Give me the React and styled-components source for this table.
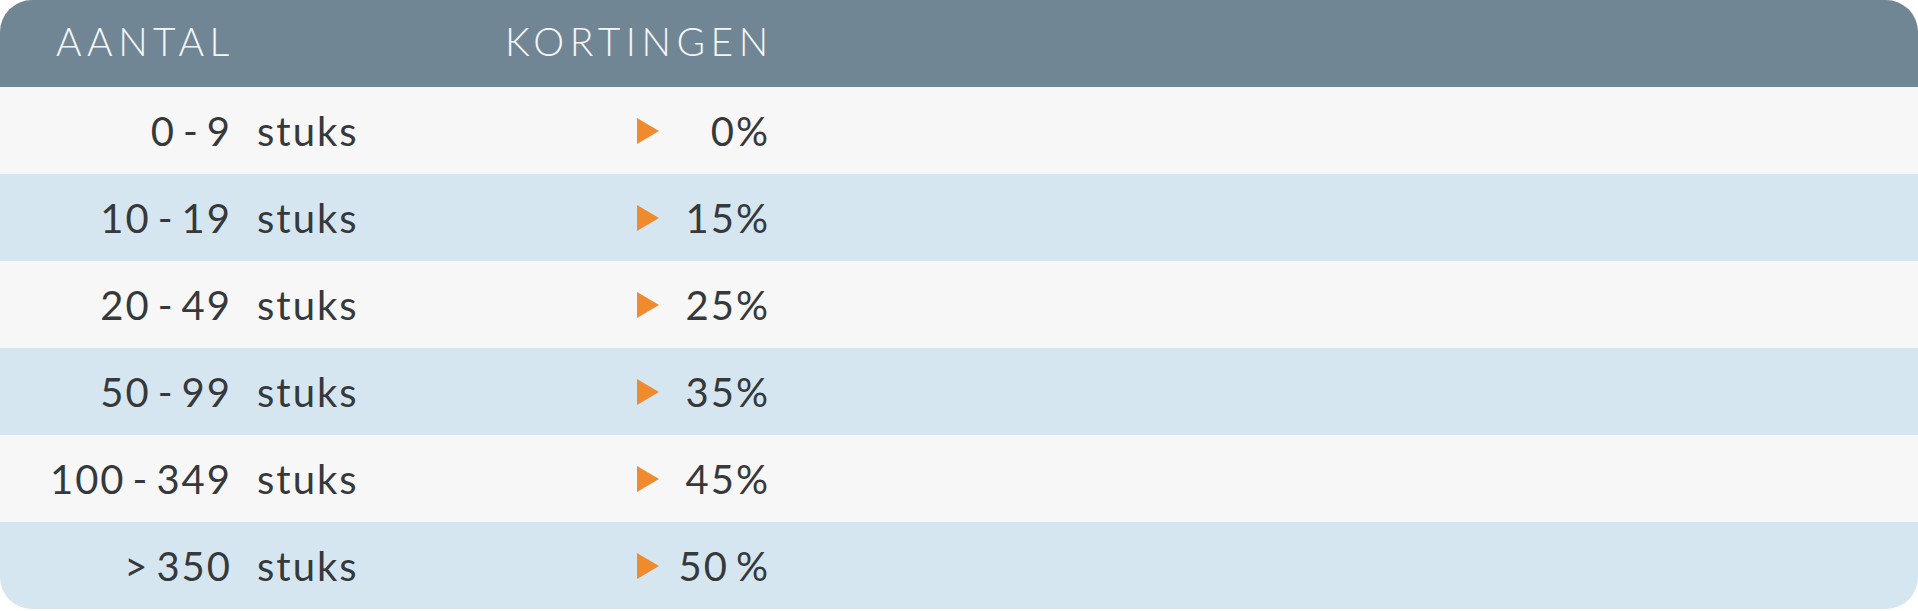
import React from 'react';
import styled, { createGlobalStyle } from 'styled-components';

// colours picked from the screenshot
const slate = '#718694';
const paleGray = '#f7f7f7';
const paleBlue = '#d6e6f0';
const ink = '#36393c';
const orange = '#f08a2e';
const rowHeight = '87px';

const GlobalStyle = createGlobalStyle`
  body {
    margin: 0;
    background: #ffffff;
    font-family: Lato, "Open Sans", sans-serif;
  }
`

const Table = styled.div`
  width: 1918px;
  border-radius: 32px;
  overflow: hidden;
`
const Header = styled.div`
  height: ${rowHeight};
  background: ${slate};
  display: grid;
  grid-template-columns: 449px auto;
  align-items: center;
  padding-left: 56px;
  padding-bottom: 4px;
  box-sizing: border-box;
`
const HeadCell = styled.div`
  color: #f4f7fa;
  font-size: 39px;
  font-weight: 300;
  letter-spacing: 5.5px;
  line-height: 1;
`
const Row = styled.div`
  height: ${rowHeight};
  background: ${p => (p.$shaded ? paleBlue : paleGray)};
  display: grid;
  grid-template-columns: 230px 407px 22px 109px 1fr;
  align-items: center;
  color: ${ink};
  font-size: 40px;
  letter-spacing: 2px;
  line-height: 1;
`
const Qty = styled.div`
  text-align: right;
  white-space: nowrap;
  margin-right: -2px;
`
const Unit = styled.div`
  padding-left: 27px;
`
const Arrow = styled.div`
  width: 0;
  height: 0;
  border-top: 13px solid transparent;
  border-bottom: 13px solid transparent;
  border-left: 22px solid ${orange};
`
const Discount = styled.div`
  text-align: right;
  margin-right: -2px;
`

const rows = [
  { qty: '0\u2009-\u20099', discount: '0%' },
  { qty: '10\u2009-\u200919', discount: '15%' },
  { qty: '20\u2009-\u200949', discount: '25%' },
  { qty: '50\u2009-\u200999', discount: '35%' },
  { qty: '100\u2009-\u2009349', discount: '45%' },
  { qty: '>\u2009350', discount: '50\u2009%' },
];

function App() {
  return (
    <>
      <GlobalStyle />
      <Table>
        <Header>
          <HeadCell>AANTAL</HeadCell>
          <HeadCell>KORTINGEN</HeadCell>
        </Header>
        {rows.map((row, index) => (
          <Row key={index} $shaded={index % 2 === 1}>
            <Qty>{row.qty}</Qty>
            <Unit>stuks</Unit>
            <Arrow />
            <Discount>{row.discount}</Discount>
          </Row>
        ))}
      </Table>
    </>
  );
}

export default App;
